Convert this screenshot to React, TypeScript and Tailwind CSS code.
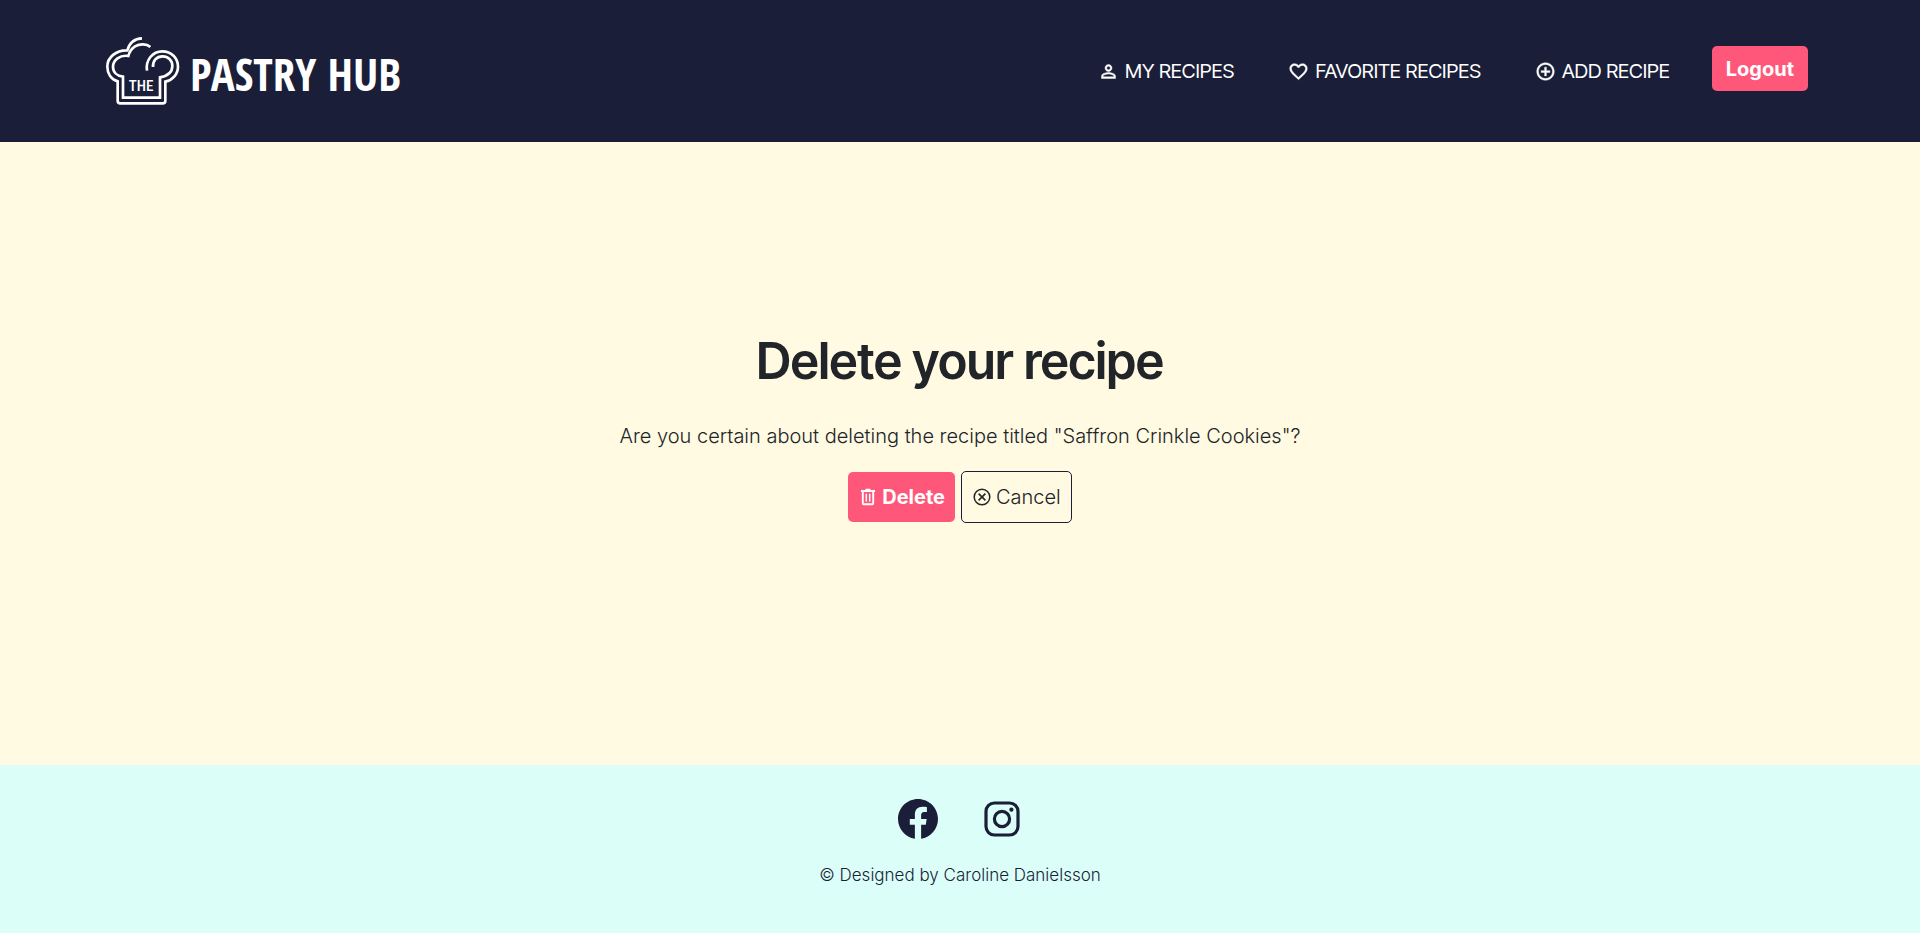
import type { ReactNode } from "react";
import { MdAddCircleOutline, MdFavoriteBorder, MdPersonOutline } from "react-icons/md";
import { BiLogoFacebookCircle } from "react-icons/bi";

function ChefHat() {
  return (
    <svg viewBox="0 0 240 240" className="size-20 shrink-0" fill="none" stroke="currentColor" strokeWidth="8" aria-hidden="true">
      <path d="M126 25C104 26 88 40 82 61C48 60 22 82 22 110C22 131 34 148 53 154V212Q53 220 61 220H188Q196 220 196 212V155C218 150 234 132 234 110C234 84 214 64 187 64C158 64 136 90 141 122" />
      <path d="M151 51C140 41 119 41 105 49C94 56 88 66 85 78C60 74 39 90 39 110C39 126 50 138 69 140V203H180V142C202 138 217 127 217 108C217 91 204 79 188 79C169 79 158 92 159 111" />
      <text x="123" y="184" textAnchor="middle" fontSize="45" fill="currentColor" stroke="none" fontWeight="500" fontFamily="'Roboto Condensed', Roboto, sans-serif">
        THE
      </text>
    </svg>
  );
}

function TrashIcon() {
  return (
    <svg viewBox="0 0 20 20" className="size-5" fill="none" stroke="currentColor" strokeWidth="1.9" aria-hidden="true">
      <path d="M3 4H17M7.5 2.8H12.5M4.8 4V16.2Q4.8 17.2 5.8 17.2H14.2Q15.2 17.2 15.2 16.2V4" />
      <path d="M8.3 6.8V14.4M11.7 6.8V14.4" strokeWidth="1.5" />
    </svg>
  );
}

function CancelIcon() {
  return (
    <svg viewBox="0 0 20 20" className="size-5" fill="none" stroke="currentColor" strokeWidth="1.5" aria-hidden="true">
      <circle cx="10" cy="10" r="7.8" />
      <path d="M6.6 6.6L13.4 13.4M13.4 6.6L6.6 13.4" />
    </svg>
  );
}

function InstagramIcon() {
  return (
    <svg viewBox="0 0 48 48" className="size-12" fill="none" stroke="currentColor" strokeWidth="3.2" aria-hidden="true">
      <rect x="8" y="8" width="32" height="32" rx="8.5" />
      <circle cx="24" cy="24" r="7.6" />
      <circle cx="33.4" cy="14.7" r="2.1" fill="currentColor" stroke="none" />
    </svg>
  );
}

function NavLink({ icon, children }: { icon: ReactNode; children: ReactNode }) {
  return (
    <a href="#" className="flex h-[50px] items-center gap-1.5 font-['Inter_Tight','Inter',sans-serif] text-xl">
      {icon}
      {children}
    </a>
  );
}

export default function App() {
  return (
    <div className="flex min-h-screen flex-col bg-white font-['Inter',sans-serif] text-[#212529]">
      <header className="flex items-start justify-between bg-[#1a1e38] pt-[30px] pr-28 pb-8 pl-[100px] text-white">
        <a href="#" className="flex items-center gap-2.5">
          <ChefHat />
          <span className="pt-2 font-['Open_Sans_Condensed','Roboto_Condensed',sans-serif] text-[45px] leading-[60px] font-bold">PASTRY HUB</span>
        </a>
        <nav className="flex items-start gap-[54px] pt-4">
          <NavLink icon={<MdPersonOutline className="size-[21px] [&_path:last-child]:stroke-[0.5]" />}>MY RECIPES</NavLink>
          <NavLink icon={<MdFavoriteBorder className="size-[21px] [&_path:last-child]:stroke-[0.5]" />}>FAVORITE RECIPES</NavLink>
          <NavLink icon={<MdAddCircleOutline className="size-[21px] [&_path:last-child]:stroke-[0.5]" />}>ADD RECIPE</NavLink>
          <button type="button" className="-ml-3 h-[45px] rounded-[5px] bg-[#ff577a] px-3.5 text-xl font-bold">
            Logout
          </button>
        </nav>
      </header>
      <main className="flex flex-1 flex-col items-center justify-center bg-[#fffae1] pb-[54px]">
        <h1 className="font-['Inter_Tight','Inter',sans-serif] text-[50px] leading-[60px] font-semibold">Delete your recipe</h1>
        <p className="mt-[30px] text-xl leading-[30px] font-light">Are you certain about deleting the recipe titled "Saffron Crinkle Cookies"?</p>
        <div className="mt-5 flex items-center gap-1.5">
          <button type="button" className="flex h-[50px] items-center gap-1 rounded-[5px] bg-[#ff577a] px-2.5 text-xl font-bold text-white">
            <TrashIcon />
            Delete
          </button>
          <button type="button" className="flex h-[52px] items-center gap-1 rounded-[5px] border border-[#1a1e38] px-2.5 text-xl font-light">
            <CancelIcon />
            Cancel
          </button>
        </div>
      </main>
      <footer className="flex flex-col items-center bg-[#dbfff8] pt-[30px] pb-[46px] text-[#1a1e38]">
        <div className="flex gap-9">
          <a href="#" aria-label="Facebook">
            <BiLogoFacebookCircle className="size-12" />
          </a>
          <a href="#" aria-label="Instagram">
            <InstagramIcon />
          </a>
        </div>
        <p className="mt-5 text-[17px] leading-6 font-light">© Designed by Caroline Danielsson</p>
      </footer>
    </div>
  );
}
